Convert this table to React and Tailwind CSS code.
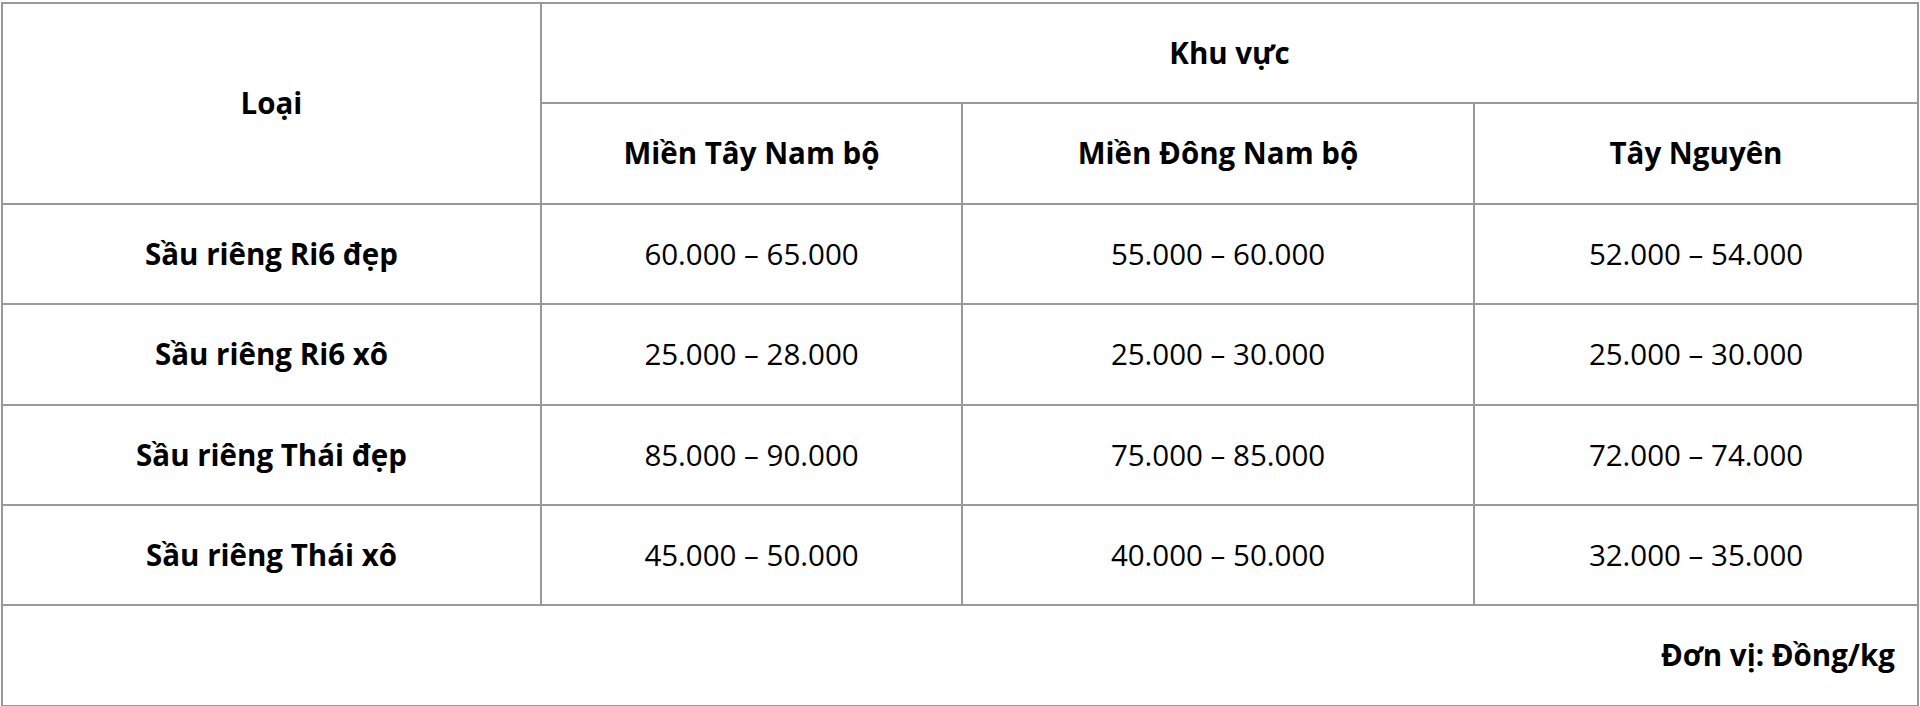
import React from 'react'

const rows = [
  ['Sầu riêng Ri6 đẹp', '60.000 – 65.000', '55.000 – 60.000', '52.000 – 54.000'],
  ['Sầu riêng Ri6 xô', '25.000 – 28.000', '25.000 – 30.000', '25.000 – 30.000'],
  ['Sầu riêng Thái đẹp', '85.000 – 90.000', '75.000 – 85.000', '72.000 – 74.000'],
  ['Sầu riêng Thái xô', '45.000 – 50.000', '40.000 – 50.000', '32.000 – 35.000'],
]

const cell = 'border-2 border-[#999999] text-center align-middle h-[100.4px] p-0'

export default function App() {
  return (
    <div className="bg-white w-[1920px] h-[706px] pt-[2px] pl-[1px]" style={{ fontFamily: '"Open Sans", "Noto Sans", sans-serif' }}>
      <table className="border-collapse table-fixed w-[1916px] text-[29.5px] text-black leading-normal">
        <colgroup>
          <col className="w-[539px]" />
          <col className="w-[421px]" />
          <col className="w-[512px]" />
          <col className="w-[444px]" />
        </colgroup>
        <tbody>
          <tr>
            <td rowSpan={2} className={`${cell} font-bold`}>Loại</td>
            <td colSpan={3} className={`${cell} font-bold`}>Khu vực</td>
          </tr>
          <tr>
            <td className={`${cell} font-bold`}>Miền Tây Nam bộ</td>
            <td className={`${cell} font-bold`}>Miền Đông Nam bộ</td>
            <td className={`${cell} font-bold`}>Tây Nguyên</td>
          </tr>
          {rows.map((r) => (
            <tr key={r[0]}>
              <td className={`${cell} font-bold`}>{r[0]}</td>
              <td className={cell}>{r[1]}</td>
              <td className={cell}>{r[2]}</td>
              <td className={cell}>{r[3]}</td>
            </tr>
          ))}
          <tr>
            <td colSpan={4} className={`${cell} font-bold !text-right pr-[22px]`}>Đơn vị: Đồng/kg</td>
          </tr>
        </tbody>
      </table>
    </div>
  )
}
